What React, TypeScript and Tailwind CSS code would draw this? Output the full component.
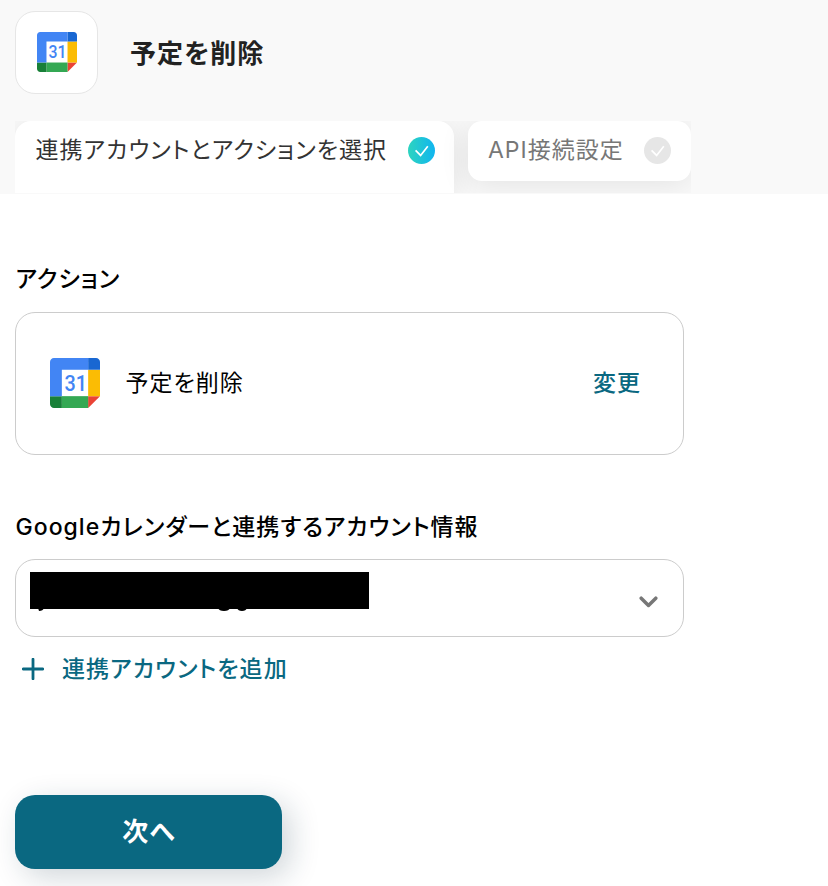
import React, { useState } from 'react';

const steps = [
    { id: 'account', label: '連携アカウントとアクションを選択', done: true },
    { id: 'api', label: 'API接続設定', done: false },
];

const CalendarLogo: React.FC<{ className?: string }> = ({ className }) => (
    <svg viewBox="0 0 200 200" className={className}>
        <path fill="#fff" d="M47 47h106v106H47z" />
        <path fill="#ea4335" d="M152.6 200 200 152.6h-47.4z" />
        <path fill="#fbbc04" d="M152.6 47.4H200v105.2h-47.4z" />
        <path fill="#34a853" d="M47.4 152.6h105.2V200H47.4z" />
        <path fill="#188038" d="M0 152.6v31.6C0 192.9 7.1 200 15.8 200h31.6v-47.4z" />
        <path fill="#1967d2" d="M200 47.4V15.8C200 7.1 192.9 0 184.2 0h-31.6v47.4z" />
        <path fill="#4285f4" d="M152.6 0H15.8C7.1 0 0 7.1 0 15.8v136.8h47.4V47.4h105.2z" />
        <text x="58" y="131" textLength="90" lengthAdjust="spacingAndGlyphs" fill="#4285f4" fontFamily="Roboto, sans-serif" fontWeight="500" fontSize="88">31</text>
    </svg>
);

const StepCheck: React.FC<{ id: string; done: boolean }> = ({ id, done }) => (
    <svg viewBox="0 0 27 27" className="w-[27px] h-[27px] shrink-0">
        <defs>
            <linearGradient id={id} x1="0" y1="0" x2="1" y2="0">
                <stop offset="0" stopColor={done ? '#2dd4bf' : '#e6e6e6'} />
                <stop offset="1" stopColor={done ? '#10b5f0' : '#e6e6e6'} />
            </linearGradient>
        </defs>
        <circle cx="13.5" cy="13.5" r="13.5" fill={`url(#${id})`} />
        <path d="M7.6 13.4l5 5 7.2-9.2" fill="none" stroke="#fff" strokeWidth="1.7" />
    </svg>
);

const App: React.FC = () => {
    const [currentStep] = useState('account');

    return (
        <div className="w-full h-[886px] bg-white overflow-hidden font-['Inter','Noto_Sans_CJK_JP',sans-serif] [font-feature-settings:'palt'] text-black">
            <header className="h-[194px] bg-[#f9f9f9] pl-[15px] pt-[11px]">
                <div className="flex items-center h-[83px]">
                    <div className="w-[83px] h-[83px] rounded-[20px] border border-[#e6e6e6] bg-white flex items-center justify-center pb-px">
                        <CalendarLogo className="w-10 h-10" />
                    </div>
                    <h1 className="ml-8 pt-0.5 text-[26px] leading-[36px] font-bold tracking-[1.1px] text-[#222]">予定を削除</h1>
                </div>
                <nav className="mt-[27px] flex items-start w-[676px] h-[72px] overflow-hidden">
                    {steps.map(step => (
                        step.id === currentStep ? (
                            <div key={step.id} className="w-[439px] h-[72px] pl-[20.5px] pr-[19.5px] pt-4 flex justify-between rounded-t-[16px] bg-white text-[#333] shadow-[0_4px_30px_rgba(0,0,0,0.09)]">
                                <span className="text-[23px] leading-[26px] whitespace-nowrap tracking-[1.05px]">{step.label}</span>
                                <StepCheck id={step.id} done={step.done} />
                            </div>
                        ) : (
                            <div key={step.id} className="ml-[14px] w-[223px] h-[60px] pl-5 pr-5 pt-4 flex justify-between rounded-[14px] bg-white text-[#777] shadow-[0_4px_30px_rgba(0,0,0,0.09)]">
                                <span className="text-[23px] leading-[26px] whitespace-nowrap tracking-[1px]">{step.label}</span>
                                <StepCheck id={step.id} done={step.done} />
                            </div>
                        )
                    ))}
                </nav>
            </header>

            <main className="pl-[15px] w-[684px]">
                <h2 className="mt-[69px] h-8 pl-[0.5px] text-[23px] leading-8 font-medium tracking-[1px]">アクション</h2>
                <section className="mt-[17px] h-[143px] pl-[34px] pr-[42px] pb-px flex items-center rounded-[20px] border border-[#ccc]">
                    <CalendarLogo className="w-[50px] h-[50px]" />
                    <span className="ml-[25.5px] pb-px text-[23px] leading-8 tracking-[1px]">予定を削除</span>
                    <button className="ml-auto pb-px text-[23px] leading-8 font-medium tracking-[1px] text-[#0a6881]">変更</button>
                </section>

                <h2 className="mt-14 h-8 pl-[0.5px] text-[23px] leading-8 font-medium tracking-[1.03px] whitespace-nowrap">Googleカレンダーと連携するアカウント情報</h2>
                <div className="mt-4 h-[78px] pl-[14px] pr-6 flex items-start justify-between rounded-[20px] border border-[#ccc]">
                    <div className="mt-3 relative w-[339px] h-[37px] bg-black">
                        <svg viewBox="0 0 339 40" className="absolute left-0 top-0 w-[339px] h-10">
                            <path d="M8 36h6q-1 3-5 3zM188 36h12q-1 3-6 3t-6-3zM207 36h10q-1 3-5 3t-5-3z" />
                        </svg>
                    </div>
                    <svg viewBox="0 0 20 12" className="mt-9 w-5 h-3">
                        <path d="M2.2 2.2l7.3 7.3 7.3-7.3" fill="none" stroke="#777" strokeWidth="3.5" strokeLinecap="round" strokeLinejoin="round" />
                    </svg>
                </div>

                <button className="mt-4 ml-[7px] h-8 flex items-center text-[#0a6881]">
                    <svg viewBox="0 0 22 22" className="w-[22px] h-[22px]">
                        <path d="M11 1.2v19.6M1.2 11h19.6" stroke="currentColor" strokeWidth="2.8" strokeLinecap="round" />
                    </svg>
                    <span className="ml-[18px] text-[23px] leading-8 font-medium tracking-[1.1px]">連携アカウントを追加</span>
                </button>

                <button className="mt-[110px] w-[267px] h-[74px] pl-px pb-0.5 rounded-[20px] bg-[#0a6881] text-white text-[26px] font-bold tracking-[1px] shadow-[8px_8px_30px_rgba(20,50,70,0.2)]">次へ</button>
            </main>
        </div>
    );
};

export default App;
